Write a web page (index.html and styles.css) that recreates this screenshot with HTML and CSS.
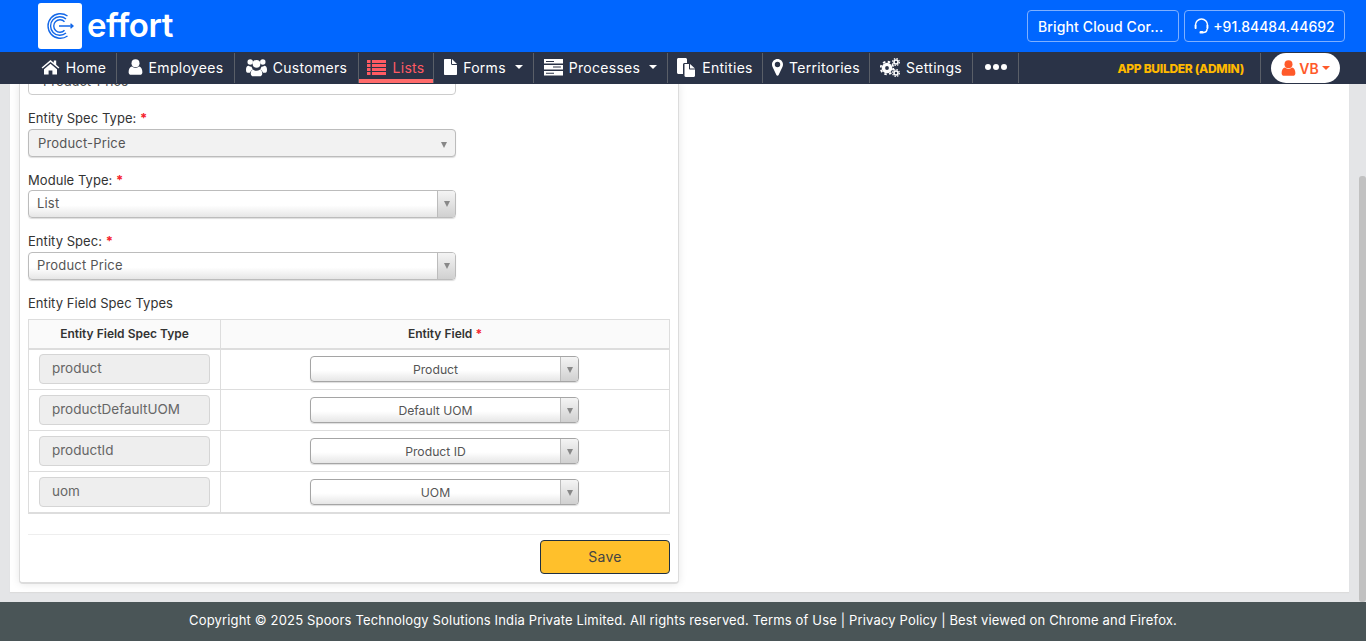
FILE: index.html
```html
<!DOCTYPE html>
<html lang="en">
<head>
<meta charset="utf-8">
<title>Effort</title>
<link rel="stylesheet" href="styles.css">
</head>
<body>
<div class="page">
  <header class="topbar">
    <div class="brand">
      <span class="logo-box">
        <svg width="28" height="28" viewBox="0 0 28 28" fill="none" stroke="#1468e8" stroke-width="1.4">
          <path d="M21.500 4A12.300 12.300 0 1 0 21.500 24"/>
          <path d="M20 7A9.300 9.300 0 1 0 20 21"/>
          <path d="M18.500 9.800A6.200 6.200 0 1 0 18.500 18.200"/>
          <path d="M13 14H27M24.500 11.800L27 14L24.500 16.200"/>
        </svg>
      </span>
      <span class="wordmark">effort</span>
    </div>
    <div class="top-actions">
      <a class="top-btn company">Bright Cloud Cor...</a>
      <a class="top-btn phone">
        <svg width="15" height="16" viewBox="0 0 15 16" fill="none" stroke="#fff" stroke-width="1.5">
          <path d="M1.500 10V7a6 6 0 0 1 12 0v3"/>
          <rect x="0.800" y="7" width="1.600" height="4" fill="#fff" stroke="none"/>
          <rect x="12.600" y="7" width="1.600" height="4" fill="#fff" stroke="none"/>
          <path d="M13 11c0 2.500-2 3.500-4 3.500"/>
          <rect x="5.500" y="13" width="4" height="2.600" rx="1.200" fill="#fff" stroke="none"/>
        </svg>
        +91.84484.44692
      </a>
    </div>
  </header>

  <nav class="navbar">
    <ul class="menu">
      <li class="item"><svg class="ico" width="19" height="16" viewBox="0 0 19 16"><path d="M9.500 1L0.600 8.400l1 1.200L9.500 3l7.900 6.600 1-1.200-3.200-2.700V1.500h-2.400v2.200zM3 10.200V15.600h4.600v-4h3.800v4H16v-5.400L9.500 4.800z"/></svg>Home</li>
      <li class="item"><svg class="ico" width="15" height="16" viewBox="0 0 15 16"><circle cx="7.500" cy="4.200" r="4"/><path d="M0.600 13.200C0.600 10 2 8 4 7.600 5 8.500 6.200 9 7.500 9s2.500-.5 3.500-1.400C13 8 14.400 10 14.400 13.200c0 1.600-1.100 2.600-2.600 2.600H3.200C1.700 15.800.6 14.800.6 13.200z"/></svg>Employees</li>
      <li class="item"><svg class="ico" width="21" height="19" viewBox="0 0 20 17"><circle cx="4" cy="3.300" r="2.600"/><circle cx="16" cy="3.300" r="2.600"/><circle cx="10" cy="5" r="3.700"/><path d="M0 10.500C0 8 1 6.800 2.500 6.800c.8.700 1.700 1 2.800 1 .2 1 .7 1.800 1.400 2.500-1.600.6-2.600 1.900-3 3.300H1.500C.5 13.600 0 12.500 0 10.500zM20 10.500C20 8 19 6.800 17.500 6.800c-.8.700-1.700 1-2.800 1-.2 1-.7 1.800-1.400 2.500 1.600.6 2.600 1.900 3 3.300h2.200c1 0 1.500-1.100 1.500-3.100z"/><path d="M4.500 14.200c0-2.300 1-3.600 2.500-3.600.8.700 1.800 1.100 3 1.100s2.200-.4 3-1.100c1.500 0 2.500 1.300 2.500 3.600 0 1.700-1 2.700-2.500 2.700H7c-1.500 0-2.500-1-2.500-2.700z"/></svg>Customers</li>
      <li class="item is-active"><svg class="ico" width="19" height="15" viewBox="0 0 19 15"><path d="M0 0h3.500v3H0zM5 0h14v3H5zM0 4h3.500v3H0zM5 4h14v3H5zM0 8h3.500v3H0zM5 8h14v3H5zM0 12h3.500v3H0zM5 12h14v3H5z"/></svg>Lists</li>
      <li class="item"><svg class="ico" width="13" height="16" viewBox="0 0 13 16"><path d="M0 .8C0 .3.300 0 .8 0H7v4.800c0 .7.500 1.200 1.200 1.200H13v9.200c0 .5-.3.800-.8.800H.8c-.5 0-.8-.3-.8-.8zM8 0l5 5H8z"/></svg>Forms<span class="caret"></span></li>
      <li class="item"><svg class="ico" width="19" height="17" viewBox="0 0 19 17"><path d="M0 0h19v4.500H0zM0 6h19v4.500H0zM0 12h19v4.500H0z"/><path class="ico-cut" d="M2 2h8v1H2zM9 7.500h8v1H9zM2 13.800h8v1H2z"/></svg>Processes<span class="caret"></span></li>
      <li class="item"><svg class="ico" width="19" height="19" viewBox="0 0 19 19"><path d="M0 1.500C0 .7.700 0 1.500 0h7C9.300 0 10 .7 10 1.500V5H7.500C6.700 5 6 5.700 6 6.500V16H1.500C.7 16 0 15.300 0 14.500z"/><path d="M7.500 6H12v4.500c0 .6.400 1 1 1h5v6.300c0 .7-.5 1.200-1.200 1.200H8.700c-.7 0-1.200-.5-1.200-1.200zM13 6l5 4.500h-5z"/></svg>Entities</li>
      <li class="item"><svg class="ico" width="11" height="17" viewBox="0 0 11 17"><path fill-rule="evenodd" d="M5.500 0C2.500 0 0 2.400 0 5.500c0 1.100.3 1.900.7 2.800L4.400 16c.2.500.6.800 1.100.8s.9-.3 1.100-.8l3.700-7.700c.4-.9.700-1.700.7-2.800C11 2.400 8.500 0 5.500 0zm0 8.200a2.700 2.700 0 1 1 0-5.400 2.700 2.700 0 0 1 0 5.400z"/></svg>Territories</li>
      <li class="item"><svg class="ico" width="20" height="19" viewBox="0 0 20 19"><g fill="none" stroke="#fff"><circle cx="7" cy="10" r="3.600" stroke-width="3.400"/><circle cx="7" cy="10" r="6.300" stroke-width="1.800" stroke-dasharray="2.500 2.450"/><circle cx="16" cy="4" r="2" stroke-width="1.600"/><circle cx="16" cy="4" r="3.400" stroke-width="1.200" stroke-dasharray="1.500 1.170"/><circle cx="16" cy="15" r="2" stroke-width="1.600"/><circle cx="16" cy="15" r="3.400" stroke-width="1.200" stroke-dasharray="1.500 1.170"/></g></svg>Settings</li>
      <li class="item more"><span class="dot"></span><span class="dot"></span><span class="dot"></span></li>
    </ul>
    <div class="nav-right">
      <span class="role">APP BUILDER (ADMIN)</span>
      <span class="nav-sep"></span>
      <button class="user-pill">
        <svg width="15" height="16" viewBox="0 0 15 16"><circle cx="7.500" cy="4.200" r="4"/><path d="M0.600 13.200C0.600 10 2 8 4 7.600 5 8.500 6.200 9 7.500 9s2.500-.5 3.500-1.400C13 8 14.400 10 14.400 13.200c0 1.600-1.100 2.600-2.600 2.600H3.200C1.700 15.800.6 14.800.6 13.200z"/></svg>
        <span>VB</span><i class="pill-caret"></i>
      </button>
    </div>
  </nav>

  <main class="content">
    <section class="panel">
      <form class="card">
        <div class="input cut">Product-Price</div>

        <div class="field">
          <label class="lbl">Entity Spec Type: <b class="req">*</b></label>
          <div class="select plain"><span>Product-Price</span><i class="tri"></i></div>
        </div>
        <div class="field">
          <label class="lbl">Module Type: <b class="req">*</b></label>
          <div class="select"><span>List</span><em class="arrow"><i class="tri"></i></em></div>
        </div>
        <div class="field">
          <label class="lbl">Entity Spec: <b class="req">*</b></label>
          <div class="select"><span>Product Price</span><em class="arrow"><i class="tri"></i></em></div>
        </div>

        <div class="field">
          <label class="lbl">Entity Field Spec Types</label>
        </div>

        <table class="grid">
          <thead>
            <tr><th class="col-a">Entity Field Spec Type</th><th>Entity Field <b class="req">*</b></th></tr>
          </thead>
          <tbody>
            <tr><td><div class="ro">product</div></td><td><div class="select mini"><span>Product</span><em class="arrow"><i class="tri"></i></em></div></td></tr>
            <tr><td><div class="ro">productDefaultUOM</div></td><td><div class="select mini"><span>Default UOM</span><em class="arrow"><i class="tri"></i></em></div></td></tr>
            <tr><td><div class="ro">productId</div></td><td><div class="select mini"><span>Product ID</span><em class="arrow"><i class="tri"></i></em></div></td></tr>
            <tr><td><div class="ro">uom</div></td><td><div class="select mini"><span>UOM</span><em class="arrow"><i class="tri"></i></em></div></td></tr>
          </tbody>
        </table>

        <div class="actions"><button type="button" class="save">Save</button></div>
      </form>
    </section>
    <div class="scrollbar"><div class="thumb"></div></div>
  </main>

  <footer class="footer">Copyright © 2025 Spoors Technology Solutions India Private Limited. All rights reserved. Terms of Use | Privacy Policy | Best viewed on Chrome and Firefox.</footer>
</div>
</body>
</html>
```
FILE: styles.css
```css
* { box-sizing: border-box; }
html, body { margin: 0; height: 100%; overflow: hidden; }
body { font-family: Inter, "Open Sans", sans-serif; color: #333; background: #e4e5e7; }
.page { height: 641px; display: flex; flex-direction: column; }

.topbar { height: 52px; background: #0066ff; display: flex; align-items: center; justify-content: space-between; padding: 0 21px 0 38px; }
.brand { display: flex; align-items: center; gap: 5px; }
.logo-box { width: 44px; height: 46px; background: #fff; border-radius: 3px; display: flex; align-items: center; justify-content: center; }
.wordmark { color: #fff; font-size: 33px; font-weight: 600; letter-spacing: -0.4px; line-height: 44px; margin-top: -3px; }
.top-actions { display: flex; gap: 5px; }
.top-btn { height: 32px; border: 1px solid #7fb0ff; border-radius: 4px; color: #fff; font-size: 14px; font-weight: 500; display: flex; align-items: center; justify-content: center; white-space: nowrap; }
.company { width: 152px; justify-content: flex-start; padding-left: 10px; letter-spacing: 0.12px; }
.phone { width: 161px; gap: 4px; }

.navbar { height: 32px; background: #2a3347; display: flex; justify-content: space-between; padding-left: 31px; }
.menu { list-style: none; margin: 1px 0 0; padding: 0; display: grid; grid-template-columns: 86px 118px 124px 75px 100px 134px 95px 107px 103px 46px; height: 30px; }
.item { display: flex; align-items: center; justify-content: center; gap: 6px; padding-bottom: 2px; color: #fff; font-size: 14px; letter-spacing: 0.3px; border-right: 1px solid #5a5f68; white-space: nowrap; }
.ico { fill: #fff; flex: none; }
.ico-cut { fill: #2a3347; }
.is-active { color: #ff5a63; box-shadow: inset 0 -4px 0 #ff6b6b; }
.is-active .ico { fill: #ff5a63; }
.caret { width: 0; height: 0; margin-left: 3px; border-left: 4px solid transparent; border-right: 4px solid transparent; border-top: 4px solid #fff; }
.more { gap: 2px; }
.dot { width: 6px; height: 6px; border-radius: 50%; background: #fff; }
.nav-right { display: flex; align-items: center; padding-right: 26px; }
.role { color: #ffb900; font-size: 12px; font-weight: 800; letter-spacing: -0.3px; white-space: nowrap; }
.nav-sep { width: 1px; height: 30px; background: #5a5f68; margin: 0 10px 0 16px; }
.user-pill { width: 69px; height: 30px; border: 0; border-radius: 15px; background: #fff; color: #ff5a2a; font: 600 14px Inter, sans-serif; display: flex; align-items: center; justify-content: center; gap: 3px; padding: 0; }
.user-pill svg { fill: #ff5a2a; }
.pill-caret { width: 0; height: 0; border-left: 4px solid transparent; border-right: 4px solid transparent; border-top: 4px solid #ff5a2a; }

.content { flex: 1; min-height: 0; position: relative; padding: 0 17px 10px 10px; }
.panel { height: 100%; background: #fff; overflow: hidden; padding-left: 9px; box-shadow: 0 1px 1px #dcdcdc; }
.card { display: flow-root; width: 660px; height: 500px; background: #fff; border: 1px solid #dcdcdc; border-top: 0; border-bottom-width: 2px; border-radius: 0 0 4px 4px; padding: 0 8px; box-shadow: 0 0 8px rgba(0,0,0,.1); font-size: 13px; }
.input.cut { width: 428px; height: 28px; margin-top: -17px; border: 1px solid #ccc; border-radius: 4px; padding-left: 14px; line-height: 26px; color: #555; }
.field { margin-top: 13px; }
.lbl { display: block; height: 20.5px; line-height: 21px; font-size: 13px; letter-spacing: 0.05px; color: #333; }
.req { color: #f5222d; font-weight: 700; }
.select { position: relative; width: 428px; height: 28px; border: 1px solid #bcbcbc; border-radius: 4px; background: linear-gradient(#fff 55%, #e6e6e6); padding-left: 8px; line-height: 25px; letter-spacing: 0.18px; color: #555; box-shadow: 0 1px 1px #ddd; }
.select.plain { background: #f2f2f2; padding-left: 9px; line-height: 26px; }
.select .tri { position: absolute; right: 8px; top: 12px; }
.tri { display: block; width: 0; height: 0; border-left: 3.500px solid transparent; border-right: 3.500px solid transparent; border-top: 6px solid #888; }
.arrow { position: absolute; right: 0; top: 0; bottom: 0; width: 18px; border-left: 1px solid #bcbcbc; background: linear-gradient(#f4f4f4, #d0d0d0); border-radius: 0 3px 3px 0; }
.arrow .tri { right: 5px; top: 10px; }

.grid { width: 642px; margin-top: 6px; border-collapse: collapse; table-layout: fixed; font-size: 12px; }
.grid th { height: 29px; padding: 0; background: #fafafa; border: 1px solid #ddd; border-bottom: 2px solid #ddd; color: #333; font-weight: 600; text-align: center; }
.grid .col-a { width: 192px; }
.grid td { height: 41px; padding: 0; border: 1px solid #ddd; }
.grid tbody tr:last-child td { border-bottom-width: 2px; }
.ro { width: 171px; height: 30px; margin-left: 10px; background: #eee; border: 1px solid #d5d5d5; border-radius: 4px; padding-left: 12px; line-height: 27px; font-size: 13.5px; color: #666; }
.select.mini { width: 269px; height: 26px; margin: 0 0 0 89px; padding: 0 18px 0 0; text-align: center; line-height: 25px; border-color: #a5a5a5; font-size: 12.2px; letter-spacing: 0; }
.actions { margin-top: 20px; padding-top: 5px; border-top: 1px solid #eee; display: flex; justify-content: flex-end; }
.save { width: 130px; height: 34px; padding: 0; background: #ffc02b; border: 1px solid #1f3042; border-radius: 4px; color: #444; font: 14px Inter, sans-serif; letter-spacing: 0.3px; }

.scrollbar { position: absolute; right: 0; top: 0; bottom: 0; width: 7px; }
.thumb { position: absolute; top: 92px; bottom: 0; left: 0; right: 0; background: #c1c1c1; border-radius: 3px; }

.footer { height: 39px; padding-bottom: 3px; background: #4a5557; color: #fff; font-size: 13px; letter-spacing: 0.16px; display: flex; align-items: center; justify-content: center; white-space: nowrap; }
```
